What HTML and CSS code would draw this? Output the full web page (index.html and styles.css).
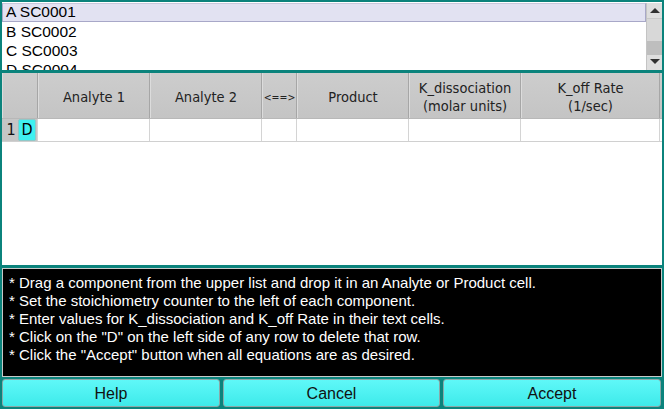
FILE: index.html
```html
<!doctype html>
<html>

<head>
	<meta charset="UTF-8">
	<title>Reaction Editor</title>
	<link rel="stylesheet" href="styles.css">
</head>

<body>
	<div class="app">
		<!-- component list -->
		<div class="list">
			<div class="items">
				<div class="item selected">A SC0001</div>
				<div class="item">B SC0002</div>
				<div class="item">C SC0003</div>
				<div class="item">D SC0004</div>
			</div>
			<div class="scroll">
				<div class="arrow up"></div>
				<div class="track">
					<div class="thumb"></div>
				</div>
				<div class="arrow down"></div>
			</div>
		</div>

		<!-- equations table -->
		<div class="grid">
			<div class="row head">
				<div class="cell rh"></div>
				<div class="cell w1">Analyte 1</div>
				<div class="cell w1">Analyte 2</div>
				<div class="cell w2 small">&lt;==&gt;</div>
				<div class="cell w1">Product</div>
				<div class="cell w1">K_dissociation<br>(molar units)</div>
				<div class="cell last">K_off Rate<br>(1/sec)</div>
			</div>
			<div class="row body">
				<div class="cell rh"><span class="num">1</span><span class="del">D</span></div>
				<div class="cell w1"></div>
				<div class="cell w1"></div>
				<div class="cell w2"></div>
				<div class="cell w1"></div>
				<div class="cell w1"></div>
				<div class="cell last"></div>
			</div>
		</div>

		<!-- instructions -->
		<div class="notes">
			<p>* Drag a component from the upper list and drop it in an Analyte or Product cell.</p>
			<p>* Set the stoichiometry counter to the left of each component.</p>
			<p>* Enter values for K_dissociation and K_off Rate in their text cells.</p>
			<p>* Click on the "D" on the left side of any row to delete that row.</p>
			<p>* Click the "Accept" button when all equations are as desired.</p>
		</div>

		<div class="buttons">
			<button>Help</button>
			<button>Cancel</button>
			<button>Accept</button>
		</div>
	</div>
</body>

</html>
```

FILE: styles.css
```css
body {
	margin: 0;
	padding: 0;
	background: #0b837c;
	overflow: hidden;
}

.app {
	width: 664px;
	height: 409px;
	padding: 2px 2px 0 2px;
	box-sizing: border-box;
	display: flex;
	flex-direction: column;
}

.list {
	height: 68px;
	background: #fff;
	display: flex;
	overflow: hidden;
}

.items {
	flex: 1;
	font-family: "Liberation Sans", Arial, sans-serif;
	font-size: 15.5px;
	color: #000;
	padding-top: 1px;
}

.item {
	height: 19px;
	line-height: 18px;
	padding-left: 4px;
	white-space: nowrap;
}

.selected {
	background: #e2e2f2;
	border: 1px solid #a8a8c8;
	border-top-color: #c8c8dc;
	height: 17px;
	line-height: 16px;
	padding-left: 3px;
	margin-bottom: 1px;
}

.scroll {
	width: 15px;
	display: flex;
	flex-direction: column;
	background: #dadada;
	border-left: 1px solid #c4c4c4;
	margin-top: 1px;
}

.arrow {
	height: 15px;
	position: relative;
	background: #dedede;
}

.arrow::after {
	content: "";
	position: absolute;
	left: 3px;
	border-left: 5px solid transparent;
	border-right: 5px solid transparent;
}

.up::after {
	top: 5px;
	border-bottom: 5px solid #303030;
}

.down::after {
	top: 4px;
	border-top: 5px solid #303030;
}

.track {
	flex: 1;
	display: flex;
	flex-direction: column;
	justify-content: flex-end;
	background: #d8d8d8;
	border-top: 1px solid #c8c8c8;
}

.thumb {
	height: 14px;
	background: #bebebe;
}

.grid {
	margin-top: 3px;
	height: 192px;
	background: #fff;
	font-family: "DejaVu Sans Condensed", "DejaVu Sans", sans-serif;
	font-size: 14.5px;
	color: #222;
}

.row {
	display: flex;
}

.head {
	height: 46px;
	background: linear-gradient(#cdcdcd, #c4c4c4);
	border-bottom: 1px solid #b8b8b8;
	box-sizing: border-box;
}

.cell {
	box-sizing: border-box;
	border-right: 1px solid #d4d4d4;
	display: flex;
	align-items: center;
	justify-content: center;
	text-align: center;
	line-height: 18px;
}

.head .cell {
	border-right: 1px solid #a6a6a6;
	border-left: 1px solid #dcdcdc;
	padding-top: 2px;
}

.rh {
	width: 36px;
}

.w1 {
	width: 112px;
}

.w2 {
	width: 35px;
}

.last {
	width: 139px;
}

.head .small {
	font-size: 10.5px;
	white-space: nowrap;
	overflow: visible;
}

.body {
	height: 23px;
	border-bottom: 1px solid #d0d0d0;
	box-sizing: border-box;
}

.body .rh {
	background: #c6c6c6;
	justify-content: flex-start;
	padding-left: 3px;
	font-size: 16px;
	color: #111;
}

.num {
	width: 12px;
}

.del {
	width: 16px;
	height: 20px;
	line-height: 20px;
	margin-left: 1px;
	background: #3ff0f0;
	border: 1px solid #8fc8c8;
	border-radius: 2px;
	font-size: 16px;
	text-align: center;
	color: #000;
}

.notes {
	margin-top: 3px;
	height: 109px;
	background: #000;
	border: 1px solid #c8c8c8;
	box-sizing: border-box;
	padding: 5px 0 0 6px;
	font-family: "Liberation Sans", Arial, sans-serif;
	font-size: 15px;
	color: #fff;
}

.notes p {
	margin: 0;
	line-height: 18px;
	white-space: nowrap;
}

.buttons {
	margin-top: 2px;
	height: 28px;
	display: grid;
	grid-template-columns: 218px 217px 218px;
	gap: 3px;
}

.buttons button {
	margin: 0;
	padding: 1px 0 0 0;
	background: linear-gradient(#5ff8f8, #3eeaea);
	border: 1px solid #8aa8a8;
	border-radius: 3px;
	font-family: "Liberation Sans", Arial, sans-serif;
	font-size: 16px;
	color: #111;
}
```
